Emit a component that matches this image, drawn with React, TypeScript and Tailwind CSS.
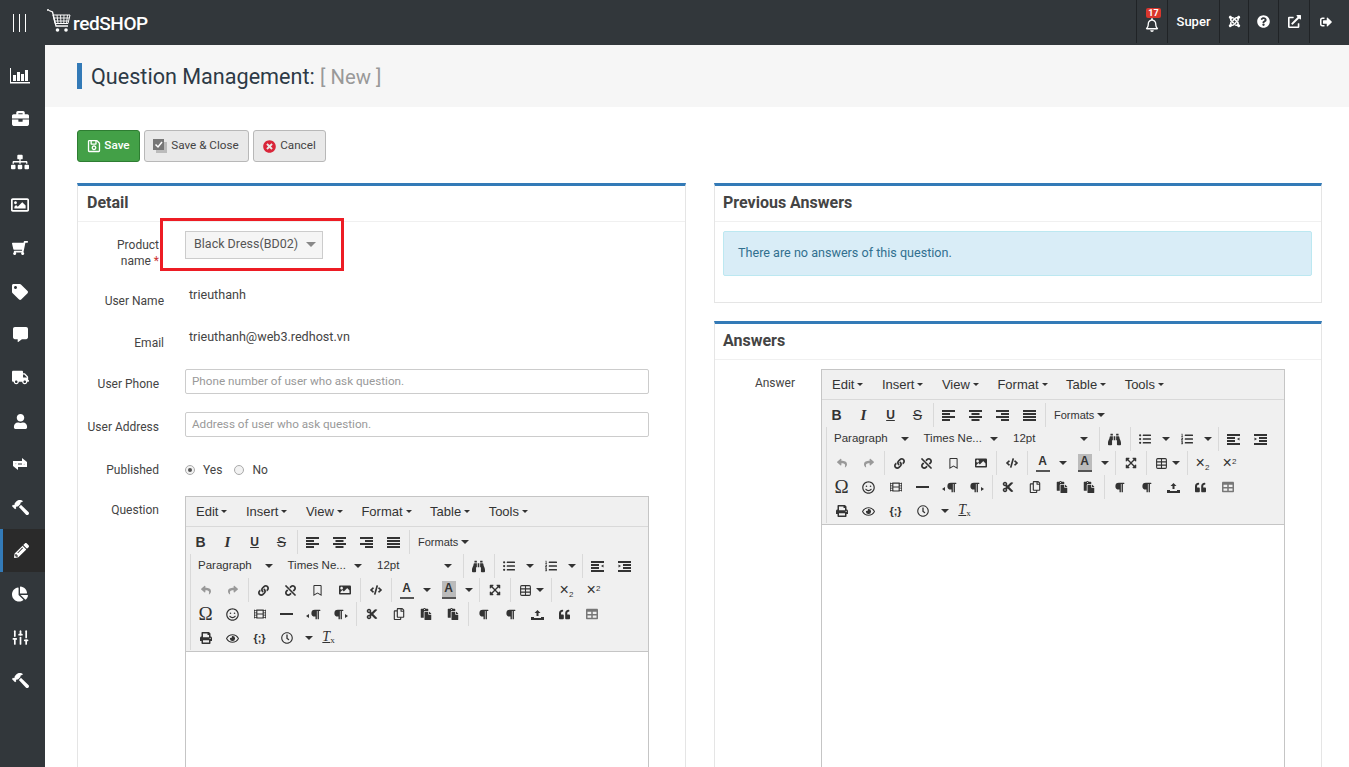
import type { ReactNode } from "react";
import {
  FaBinoculars, FaBriefcase, FaChartPie, FaCode, FaCommentAlt, FaCut, FaExpandArrowsAlt, FaExternalLinkAlt, FaFilm,
  FaHammer, FaImage, FaJoomla, FaLink, FaListOl, FaListUl, FaParagraph, FaPaste, FaPencilAlt, FaPrint, FaQuestionCircle,
  FaQuoteLeft, FaRegBell, FaRegBookmark, FaRegClock, FaRegCopy, FaRegEye, FaRegImage, FaRegSave, FaRegSmile, FaReply,
  FaShare, FaShoppingCart, FaSignOutAlt, FaSitemap, FaTable, FaTag, FaTimesCircle, FaTruck, FaUnlink, FaUser,
} from "react-icons/fa";
import { LuSlidersVertical, LuTable } from "react-icons/lu";

function ChartIcon() {
  return (
    <svg width="20" height="16" viewBox="0 0 20 16" fill="currentColor">
      <path d="M0 0h1v14h19v1.5H0z" />
      <rect x="3" y="7" width="3" height="6" />
      <rect x="7" y="4" width="3" height="9" />
      <rect x="11" y="6" width="3" height="7" />
      <rect x="15" y="2" width="3" height="11" />
    </svg>
  );
}

function LoopIcon() {
  return (
    <svg width="18" height="16" viewBox="0 0 18 16" fill="currentColor">
      <path d="M2 10V5h9V2l5 4-5 4V7.500H4.500V10z" />
      <path d="M16 6v5H7v3l-5-4 5-4v2.500h6.500V6z" />
    </svg>
  );
}

function LogoCart() {
  return (
    <svg width="24" height="24" viewBox="0 0 24 24" fill="none" stroke="currentColor" className="-mt-[4px]">
      <circle cx="1" cy="1" r="1" fill="currentColor" stroke="none" />
      <path d="M2 1.500l3.500 1.500 3.500 14h12" strokeWidth="1.300" />
      <path d="M6 6h17l-2 8.500H8z" strokeWidth="1" />
      <path d="M10 6l1 8.500M13.500 6l.5 8.500M17 6l-.2 8.500M20.500 6l-1 8.500M7 9h15M7.800 12h13.500" strokeWidth="0.900" />
      <circle cx="10.500" cy="21" r="1.800" fill="currentColor" stroke="none" />
      <circle cx="19" cy="21" r="1.800" fill="currentColor" stroke="none" />
    </svg>
  );
}

const sideIcons = [
  <ChartIcon key="a" />, <FaBriefcase key="b" size={17} />, <FaSitemap key="c" size={18} />,
  <FaRegImage key="d" size={18} />, <FaShoppingCart key="e" size={16} className="-scale-x-100" />,
  <FaTag key="f" size={16} />, <FaCommentAlt key="g" size={15} />, <FaTruck key="h" size={17} />,
  <FaUser key="i" size={15} />, <LoopIcon key="j" />, <FaHammer key="k" size={17} className="-scale-x-100" />,
  <FaPencilAlt key="l" size={15} />, <FaChartPie key="m" size={16} />, <LuSlidersVertical key="n" size={17} strokeWidth={2.4} />,
  <FaHammer key="o" size={17} className="-scale-x-100" />,
];

function Caret() {
  return <span className="inline-block w-0 h-0 border-x-[4px] border-t-[4px] border-x-transparent border-t-[#333]" />;
}

function Btn({ children, muted }: { children: ReactNode; muted?: boolean }) {
  return (
    <span className={`w-[27px] h-6 flex items-center justify-center text-[13px] ${muted ? "text-[#999]" : "text-[#333]"}`}>
      {children}
    </span>
  );
}

function Split({ children, w = 42, gap = 3 }: { children: ReactNode; w?: number; gap?: number }) {
  return (
    <span className="h-6 flex items-center" style={{ width: w }}>
      <span className="w-[27px] flex items-center justify-center text-[13px] text-[#333]">{children}</span>
      <span className="flex" style={{ marginLeft: gap }}><Caret /></span>
    </span>
  );
}

function Group({ children, first }: { children: ReactNode; first?: boolean }) {
  return (
    <div className={first ? "flex" : "flex ml-[2px] border-l border-[#d9d9d9] pl-[1px]"}>
      {children}
    </div>
  );
}

function ListBox({ label }: { label: string }) {
  return (
    <span className="w-[87.5px] mr-[2px] h-6 flex items-center justify-between pl-[6px] pr-[7px] text-[11.5px] text-[#333]">
      {label}
      <Caret />
    </span>
  );
}

function ColorA({ bg }: { bg?: boolean }) {
  return (
    <span className={`w-[14px] h-[18px] flex flex-col items-center justify-between text-[12px] leading-[14px] font-bold ${bg ? "bg-[#bbb]" : ""}`}>
      A
      <span className="w-full h-[2px] bg-[#555]" />
    </span>
  );
}

function Para({ side }: { side: "l" | "r" }) {
  return (
    <span className="flex items-center gap-[1px]">
      {side === "l" && <span className="w-0 h-0 border-y-[2px] border-r-[3px] border-y-transparent border-r-[#333] mt-1" />}
      <FaParagraph size={11} />
      {side === "r" && <span className="w-0 h-0 border-y-[2px] border-l-[3px] border-y-transparent border-l-[#333] mt-1" />}
    </span>
  );
}

// four bars, x offset and width per bar
function Bars({ rows, arrow }: { rows: [number, number][]; arrow?: "l" | "r" }) {
  return (
    <svg width="13" height="11" viewBox="0 0 13 11" fill="currentColor">
      {rows.map(([x, w], i) => (
        <rect key={i} x={x} y={i * 3} width={w} height="2" />
      ))}
      {arrow === "l" && <path d="M12.500 3.500v3l-2.500-1.500z" />}
      {arrow === "r" && <path d="M.500 3.500v3l2.500-1.500z" />}
    </svg>
  );
}

function Upload() {
  return (
    <svg width="13" height="11" viewBox="0 0 13 11" fill="currentColor">
      <path d="M6.500 1l3 3h-2v3h-2V4h-2z" />
      <path d="M0 8h3v1h7V8h3v3H0z" />
    </svg>
  );
}

function Editor() {
  const menus = ["Edit", "Insert", "View", "Format", "Table", "Tools"];
  return (
    <div className="w-[464px] h-[500px] border border-[#c5c5c5] bg-white font-['Liberation_Sans',sans-serif]">
      <div className="h-[30px] bg-[#f0f0f0] border-b border-[#d9d9d9] flex items-center pl-[10px] gap-[18.500px] text-[13px] text-[#333]">
        {menus.map((m) => (
          <span key={m} className="flex items-center gap-[3px]">
            {m}
            <span className="w-0 h-0 border-x-[3px] border-t-[3px] border-x-transparent border-t-[#333]" />
          </span>
        ))}
      </div>
      <div className="h-[125px] bg-[#f0f0f0] border-b border-[#c5c5c5] pt-[3px]">
        <div className="h-6 flex pl-[1px]">
          <Group first>
            <Btn><span className="font-bold text-[14px]">B</span></Btn>
            <Btn><span className="font-['Liberation_Serif',serif] font-bold italic text-[15px]">I</span></Btn>
            <Btn><span className="underline text-[12px] font-bold">U</span></Btn>
            <Btn><span className="line-through text-[14px]">S</span></Btn>
          </Group>
          <Group>
            <Btn><Bars rows={[[0, 13], [0, 8], [0, 13], [0, 8]]} /></Btn>
            <Btn><Bars rows={[[0, 13], [2.500, 8], [0, 13], [2.500, 8]]} /></Btn>
            <Btn><Bars rows={[[0, 13], [5, 8], [0, 13], [5, 8]]} /></Btn>
            <Btn><Bars rows={[[0, 13], [0, 13], [0, 13], [0, 13]]} /></Btn>
          </Group>
          <Group>
            <span className="h-6 flex items-center gap-[3px] pl-[7px] text-[11px] text-[#333]">Formats<Caret /></span>
          </Group>
        </div>
        <div className="h-6 flex pl-[2px]">
          <Group>
            <ListBox label="Paragraph" />
            <ListBox label="Times Ne..." />
            <ListBox label="12pt" />
          </Group>
          <Group><Btn><FaBinoculars size={13} /></Btn></Group>
          <Group>
            <Split><FaListUl size={12} /></Split>
            <Split><FaListOl size={12} /></Split>
          </Group>
          <Group>
            <Btn><Bars rows={[[0, 13], [0, 8], [0, 8], [0, 13]]} arrow="l" /></Btn>
            <Btn><Bars rows={[[0, 13], [5, 8], [5, 8], [0, 13]]} arrow="r" /></Btn>
          </Group>
        </div>
        <div className="h-6 flex pl-[2px]">
          <Group>
            <Btn muted><FaReply size={10} /></Btn>
            <Btn muted><FaShare size={10} /></Btn>
          </Group>
          <Group>
            <Btn><FaLink size={11} /></Btn>
            <Btn><FaUnlink size={11} /></Btn>
            <Btn><FaRegBookmark size={11} /></Btn>
            <Btn><FaImage size={12} /></Btn>
          </Group>
          <Group><Btn><FaCode size={12} /></Btn></Group>
          <Group>
            <Split><ColorA /></Split>
            <Split><ColorA bg /></Split>
          </Group>
          <Group><Btn><FaExpandArrowsAlt size={12} /></Btn></Group>
          <Group><Split w={37} gap={-3}><LuTable size={13} /></Split></Group>
          <Group>
            <Btn><span className="text-[16px] leading-none">×<sub className="text-[8px]">2</sub></span></Btn>
            <Btn><span className="text-[16px] leading-none">×<sup className="text-[8px]">2</sup></span></Btn>
          </Group>
        </div>
        <div className="h-6 flex pl-[2px]">
          <Group>
            <Btn><span className="font-['Liberation_Serif',serif] text-[19px]">Ω</span></Btn>
            <Btn><FaRegSmile size={13} /></Btn>
            <Btn><FaFilm size={12} /></Btn>
            <Btn><span className="w-[13px] h-[2px] bg-[#333]" /></Btn>
            <Btn><Para side="l" /></Btn>
            <Btn><Para side="r" /></Btn>
          </Group>
          <Group>
            <Btn><FaCut size={12} /></Btn>
            <Btn><FaRegCopy size={12} /></Btn>
            <Btn><FaPaste size={12} /></Btn>
            <Btn><FaPaste size={12} /></Btn>
          </Group>
          <Group>
            <Btn><FaParagraph size={11} /></Btn>
            <Btn><FaParagraph size={11} /></Btn>
            <Btn><Upload /></Btn>
            <Btn><FaQuoteLeft size={11} /></Btn>
            <Btn><FaTable size={12} className="text-[#777]" /></Btn>
          </Group>
        </div>
        <div className="h-6 flex pl-[2px]">
          <Group>
            <Btn><FaPrint size={12} /></Btn>
            <Btn><FaRegEye size={13} /></Btn>
            <Btn><span className="text-[11px] font-bold">{"{;}"}</span></Btn>
            <Split gap={5}><FaRegClock size={12} /></Split>
            <Btn><span className="font-['Liberation_Serif',serif] italic text-[14px] leading-none underline -mt-[3px]">T<sub className="not-italic text-[9px]">x</sub></span></Btn>
          </Group>
        </div>
      </div>
    </div>
  );
}

function Label({ children, pr = 26, top = 0, w = 107 }: { children: ReactNode; pr?: number; top?: number; w?: number }) {
  return (
    <div className="shrink-0 text-right text-[12px] leading-4 text-[#444]" style={{ width: w, paddingRight: pr, paddingTop: top }}>
      {children}
    </div>
  );
}

function Radio({ on }: { on?: boolean }) {
  return (
    <span className="w-[10px] h-[10px] rounded-full border border-[#aaa] bg-[#f2f2f2] flex items-center justify-center">
      {on && <span className="w-1 h-1 rounded-full bg-[#555]" />}
    </span>
  );
}

function Panel({ title, children, className, titlePad = 9 }: { title: string; children: ReactNode; className?: string; titlePad?: number }) {
  return (
    <section className={`bg-white border border-[#e5e5e5] border-t-[3px] border-t-[#337ab7] ${className ?? ""}`}>
      <h3 className="h-[36px] pb-[2px] flex items-center text-[16px] font-bold text-[#444] border-b border-[#f0f0f0]" style={{ paddingLeft: titlePad }}>{title}</h3>
      {children}
    </section>
  );
}

function TopCell({ children, w, className }: { children: ReactNode; w: number; className?: string }) {
  return (
    <div className={`h-[43px] border-l border-[#202326] flex items-center justify-center text-white relative ${className ?? ""}`} style={{ width: w }}>
      {children}
    </div>
  );
}

function SaveCloseIcon() {
  return (
    <svg width="14" height="14" viewBox="0 0 14 14">
      <rect x="3" y="3" width="11" height="11" fill="#bbb" />
      <rect x="0" y="0" width="11" height="11" fill="#777" />
      <path d="M2.500 5.500l2.500 2.500 4-5" fill="none" stroke="#fff" strokeWidth="1.500" />
    </svg>
  );
}

export default function App() {
  return (
    <div className="h-[767px] overflow-hidden bg-white font-['Roboto',sans-serif] flex flex-col">
      <header className="h-[45px] shrink-0 bg-[#32373b] flex items-start">
        <div className="w-[45px] h-[45px] flex items-center justify-center gap-[4.500px] pr-[6px]">
          <span className="w-[1.500px] h-[18px] bg-white" />
          <span className="w-[1.500px] h-[18px] bg-white" />
          <span className="w-[1.500px] h-[18px] bg-white" />
        </div>
        <div className="flex items-center h-[45px] ml-[2px] text-white">
          <LogoCart />
          <span className="text-[19px] font-medium tracking-[-0.400px] ml-[2px] mt-[3px]">redSHOP</span>
        </div>
        <div className="ml-auto flex">
          <TopCell w={31}>
            <FaRegBell size={14} className="mt-[7px]" />
            <span className="absolute left-[9px] top-[8px] w-[15px] h-[10px] rounded-[2px] bg-[#d9372d] text-[9px] leading-[10px] font-bold text-center">17</span>
          </TopCell>
          <TopCell w={52}><span className="text-[13px] font-medium">Super</span></TopCell>
          <TopCell w={29}><FaJoomla size={13} /></TopCell>
          <TopCell w={30}><FaQuestionCircle size={13} /></TopCell>
          <TopCell w={31}><FaExternalLinkAlt size={13} /></TopCell>
          <TopCell w={40} className="pr-[7px]"><FaSignOutAlt size={12} /></TopCell>
        </div>
      </header>
      <div className="flex flex-1 min-h-0">
        <aside className="w-[45px] shrink-0 bg-[#32373b] pt-[9px] text-white">
          {sideIcons.map((icon, i) => (
            <div key={i} className={`h-[43.200px] flex items-center justify-center ${i === 11 ? "bg-[#2a2a2a] border-l-[3px] border-[#337ab7] pr-[5px]" : "pr-[5px]"}`}>
              {icon}
            </div>
          ))}
        </aside>
        <main className="flex-1 min-w-0">
          <div className="h-[62px] bg-[#f6f6f6] pl-[32px] flex items-center">
            <span className="w-[5px] h-[26px] bg-[#337ab7] mr-[9px]" />
            <h1 className="text-[21.600px] text-[#2d3a46] pt-[2px]">
              Question Management: <span className="text-[20.300px] text-[#999]">[ New ]</span>
            </h1>
          </div>
          <div className="pl-[32px] pt-[23px] flex gap-[4px] text-[11.700px]">
            <button className="h-[32px] w-[63px] rounded-[3px] bg-[#43a047] border border-[#2e7d32] text-white flex items-center justify-center gap-[3px] font-medium">
              <FaRegSave size={14} /> Save
            </button>
            <button className="h-[32px] w-[105px] rounded-[3px] bg-[#e9e9e9] border border-[#b8b8b8] text-[#444] flex items-center justify-center gap-[4px] pr-[1px]">
              <SaveCloseIcon /> Save &amp; Close
            </button>
            <button className="h-[32px] w-[73px] rounded-[3px] bg-[#e9e9e9] border border-[#b8b8b8] text-[#444] flex items-center justify-center gap-[4px]">
              <FaTimesCircle size={13} className="text-[#d9263a]" /> Cancel
            </button>
          </div>
          <div className="pl-[32px] pr-[27px] pt-[21px] grid grid-cols-[609px_1fr] gap-[28px] items-start">
            <Panel title="Detail" className="relative">
              <div className="pt-[9px]">
                <div className="flex h-[44px]">
                  <Label top={6}>Product<br />name <span className="text-[#c33]">*</span></Label>
                  <div className="w-[138px] h-[28px] bg-[#f5f5f5] border border-[#ccc] flex items-center justify-between pl-[8px] pr-[6px] pb-[1px] text-[12.500px] text-[#555]">
                    Black Dress(BD02)
                    <span className="w-0 h-0 border-x-[5px] border-t-[5px] border-x-transparent border-t-[#888]" />
                  </div>
                </div>
                <div className="flex h-[42px]">
                  <Label pr={21} top={18}>User Name</Label>
                  <span className="pl-[4px] pt-[12px] text-[12.600px] leading-4 text-[#444]">trieuthanh</span>
                </div>
                <div className="flex h-[52px]">
                  <Label pr={21} top={18}>Email</Label>
                  <span className="pl-[4px] pt-[12px] text-[12.600px] leading-4 text-[#444]">trieuthanh@web3.redhost.vn</span>
                </div>
                <div className="flex h-[43px]">
                  <Label top={7}>User Phone</Label>
                  <div className="w-[464px] h-[25px] border border-[#ccc] rounded-[2px] pl-[6px] flex items-center text-[11.700px] text-[#999]">Phone number of user who ask question.</div>
                </div>
                <div className="flex h-[43px]">
                  <Label top={7}>User Address</Label>
                  <div className="w-[464px] h-[25px] border border-[#ccc] rounded-[2px] pl-[6px] flex items-center text-[11.700px] text-[#999]">Address of user who ask question.</div>
                </div>
                <div className="flex h-[41px]">
                  <Label top={7}>Published</Label>
                  <div className="flex items-center h-[30px] text-[12px] text-[#444]">
                    <Radio on />
                    <span className="ml-[8px] mr-[12px]">Yes</span>
                    <Radio />
                    <span className="ml-[8px]">No</span>
                  </div>
                </div>
                <div className="flex">
                  <Label top={6}>Question</Label>
                  <Editor />
                </div>
              </div>
              <div className="absolute left-[82px] top-[32px] w-[184px] h-[53px] border-[3px] border-[#ed1c24]" />
            </Panel>
            <div className="flex flex-col gap-[18px]">
              <Panel title="Previous Answers" titlePad={8}>
                <div className="ml-[8px] mr-[9px] mt-[9px] mb-[26px] h-[45px] pb-[1px] bg-[#d9edf7] border border-[#bce8f1] rounded-[2px] pl-[14px] flex items-center text-[12.600px] text-[#31708f]">
                  There are no answers of this question.
                </div>
              </Panel>
              <Panel title="Answers" titlePad={8}>
                <div className="flex pt-[9px]">
                  <Label top={6} w={106} pr={26}>Answer</Label>
                  <Editor />
                </div>
              </Panel>
            </div>
          </div>
        </main>
      </div>
    </div>
  );
}
